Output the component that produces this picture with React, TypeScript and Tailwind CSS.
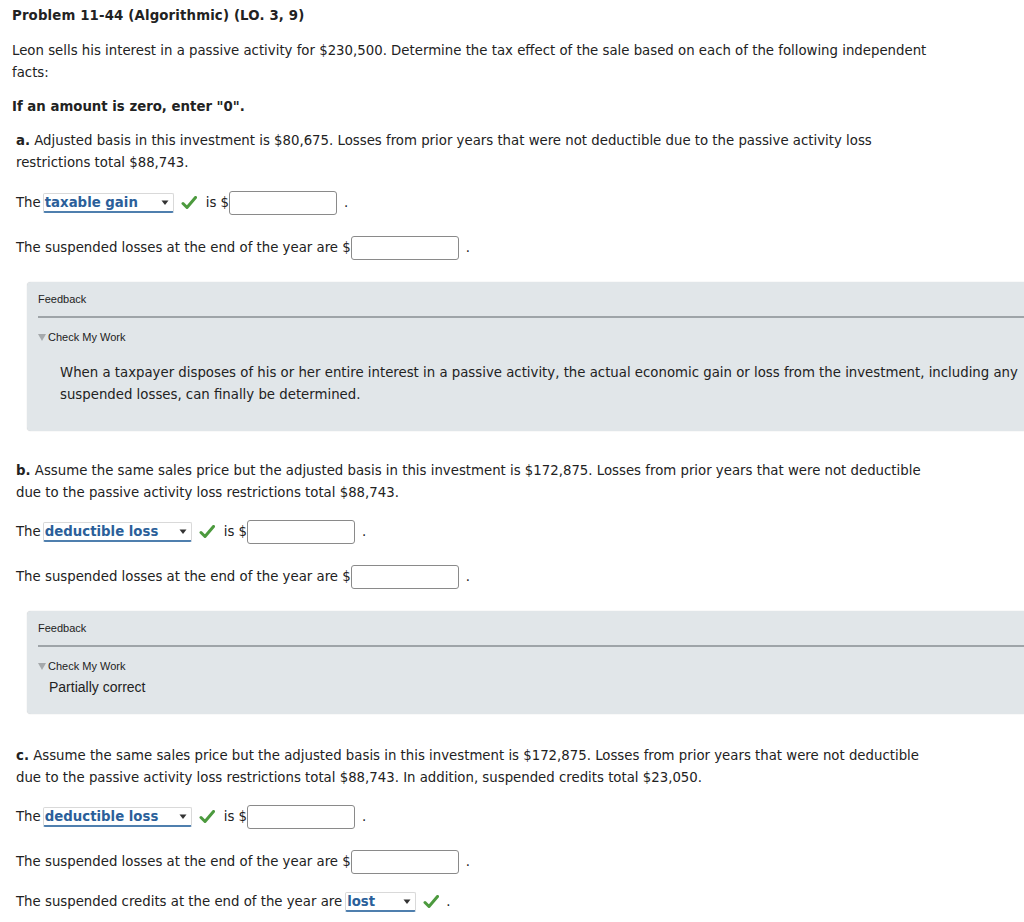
import React from "react";

const verdana = "font-['DejaVu_Sans',Verdana,sans-serif]";
const arial = "font-['Liberation_Sans',Arial,sans-serif]";

const Check = () => (
  <svg width="16" height="14" viewBox="0 0 16 14" className="mx-[7px] inline-block">
    <path d="M2 7.5 L6 11.5 L14.5 1.5" fill="none" stroke="#4c9a3e" strokeWidth="3" strokeLinecap="round" strokeLinejoin="round" />
  </svg>
);

const Dropdown = ({ label, width }: { label: string; width: string }) => (
  <span
    className={`relative inline-flex h-[20px] items-center justify-between rounded-[2px] border border-[#d9d9d9] border-b-2 border-b-[#4f7fae] bg-white pl-[1px] pr-[4px] align-middle ${width}`}
  >
    <span className="font-bold text-[#2b5f9a]">{label}</span>
    <svg width="8" height="6" viewBox="0 0 8 6">
      <path d="M0.5 0.5 L7.5 0.5 L4 5 Z" fill="#333" />
    </svg>
  </span>
);

const Box = ({ width = "w-[108px]" }: { width?: string }) => (
  <span className={`inline-block h-[24px] rounded-[3px] border border-[#8a8a8a] bg-white align-middle ${width}`} />
);

const AnswerRow = ({ label, width }: { label: string; width: string }) => (
  <div className="flex items-center h-[24px]">
    <span>The</span>
    <span className="ml-[2px]">
      <Dropdown label={label} width={width} />
    </span>
    <Check />
    <span className="ml-[2px]">is $</span>
    <Box />
    <span className="ml-[7px]">.</span>
  </div>
);

const SuspendedRow = () => (
  <div className="flex items-center h-[24px]">
    <span>The suspended losses at the end of the year are $</span>
    <Box />
    <span className="ml-[7px]">.</span>
  </div>
);

const Feedback = ({ children }: { children: React.ReactNode }) => (
  <div className={`ml-[27px] w-[1010px] rounded-tl-[4px] rounded-bl-[4px] bg-[#e1e6e9] shadow-[0_0_1px_rgba(0,0,0,0.25)] ${arial} text-[11px] text-[#222]`}>
    <div className="pl-[11px] pt-[10px] pb-[10px] leading-[14px]">Feedback</div>
    <div className="ml-[11px] h-[2px] bg-[#9ea4a8]" />
    <div className="flex items-center pl-[11px] pt-[12px] leading-[14px]">
      <svg width="8" height="7" viewBox="0 0 8 7" className="mr-[2px]">
        <path d="M0 0 L8 0 L4 7 Z" fill="#a5a9ac" />
      </svg>
      <span>Check My Work</span>
    </div>
    {children}
  </div>
);

export default function App() {
  return (
    <div className={`w-[1024px] overflow-hidden bg-white ${verdana} text-[13.3px] leading-[22px] text-[#222]`}>
      <div className="pl-[12px] pt-[5px] pr-[84px]">
        <div className="font-bold tracking-[0.15px]">Problem 11-44 (Algorithmic) (LO. 3, 9)</div>
        <p className="mt-[13px]">
          Leon sells his interest in a passive activity for $230,500. Determine the tax effect of the sale based on each of the following independent facts:
        </p>
        <p className="mt-[12px] font-bold">If an amount is zero, enter "0".</p>
      </div>

      <div className="pl-[16px] pr-[84px]">
        <p className="mt-[12px]">
          <span className="font-bold">a.</span> Adjusted basis in this investment is $80,675. Losses from prior years that were not deductible due to the passive activity loss restrictions total $88,743.
        </p>
        <div className="mt-[17px]">
          <AnswerRow label="taxable gain" width="w-[131px]" />
        </div>
        <div className="mt-[21px]">
          <SuspendedRow />
        </div>
      </div>

      <div className="mt-[22px]">
        <Feedback>
          <p className={`${verdana} text-[13.3px] leading-[22px] pl-[33px] pr-[4px] pt-[18px] pb-[25px]`}>
            When a taxpayer disposes of his or her entire interest in a passive activity, the actual economic gain or loss from the investment, including any suspended losses, can finally be determined.
          </p>
        </Feedback>
      </div>

      <div className="pl-[16px] pr-[84px]">
        <p className="mt-[29px]">
          <span className="font-bold">b.</span> Assume the same sales price but the adjusted basis in this investment is $172,875. Losses from prior years that were not deductible due to the passive activity loss restrictions total $88,743.
        </p>
        <div className="mt-[16px]">
          <AnswerRow label="deductible loss" width="w-[149px]" />
        </div>
        <div className="mt-[21px]">
          <SuspendedRow />
        </div>
      </div>

      <div className="mt-[22px]">
        <Feedback>
          <p className="pl-[22px] pt-[5px] pb-[18px] text-[14px] leading-[18px]">Partially correct</p>
        </Feedback>
      </div>

      <div className="pl-[16px] pr-[84px] pb-[12px]">
        <p className="mt-[31px]">
          <span className="font-bold">c.</span> Assume the same sales price but the adjusted basis in this investment is $172,875. Losses from prior years that were not deductible due to the passive activity loss restrictions total $88,743. In addition, suspended credits total $23,050.
        </p>
        <div className="mt-[16px]">
          <AnswerRow label="deductible loss" width="w-[149px]" />
        </div>
        <div className="mt-[21px]">
          <SuspendedRow />
        </div>
        <div className="mt-[17px] flex items-center h-[22px]">
          <span>The suspended credits at the end of the year are</span>
          <span className="ml-[3px]">
            <Dropdown label="lost" width="w-[71px]" />
          </span>
          <Check />
          <span>.</span>
        </div>
      </div>
    </div>
  );
}
